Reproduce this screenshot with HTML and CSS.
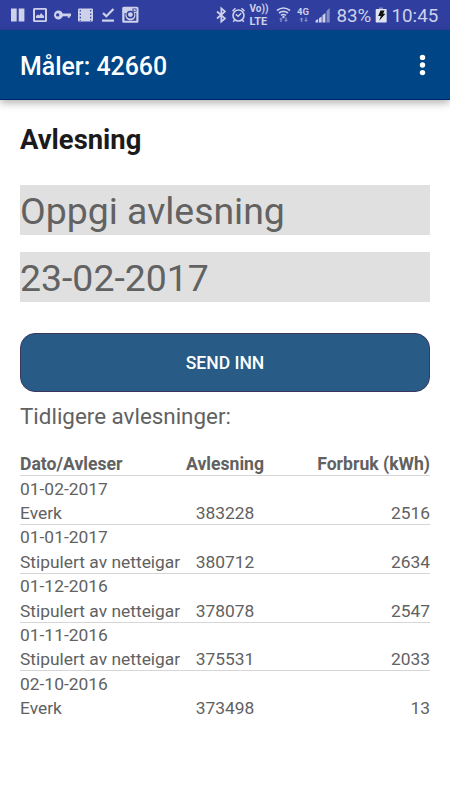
FILE: index.html
```html
<!DOCTYPE html>
<html lang="no">
<head>
<meta charset="utf-8">
<title>Måler: 42660</title>
<link rel="stylesheet" href="styles.css">
</head>
<body>
<div class="status">
  <div class="notifications">
    <svg width="14" height="30" viewBox="11 0 14 30"><path d="M11 8.500h5.700v13H11zM18.700 8.500h5.700v13h-5.700z"/></svg>
    <svg width="14" height="30" viewBox="33 0 14 30"><path fill-rule="evenodd" d="M34.500 8h11q1.500 0 1.500 1.500v11q0 1.500-1.500 1.500h-11q-1.500 0-1.500-1.500v-11q0-1.500 1.500-1.500zM35 9.700v10.600h10V9.700z"/><path d="M36 18v-2l2-1.500 1.300 1 2-2.500 1.300 2 1.400.7V18z"/></svg>
    <svg width="18" height="30" viewBox="54 0 18 30"><path fill-rule="evenodd" d="M58.500 10.500c2 0 3.500 1 4.200 3H71v2.800h-1.200v1.500h-2v-1.500h-5c-.8 2-2.300 3.200-4.300 3.200a4.500 4.500 0 1 1 0-9zM57.700 13.200a1.700 1.700 0 1 0 0 3.400 1.700 1.700 0 0 0 0-3.400z"/></svg>
    <svg width="15" height="30" viewBox="78 0 15 30"><rect x="78" y="8.500" width="15" height="13" rx="1"/><path class="cut" stroke-width="1.200" stroke-dasharray="1.600 1.800" d="M80.300 10v11M90.700 10v11"/></svg>
    <svg width="13" height="30" viewBox="102 0 13 30"><path class="line" stroke-width="2.200" d="M103 13l3.300 3.300L113.500 9"/><path d="M102 19.500h12v2.200h-12z"/></svg>
    <svg width="17" height="30" viewBox="122 0 17 30"><path fill-rule="evenodd" d="M123.700 6.800H137q1.500 0 1.500 1.500v13q0 1.500-1.500 1.500h-13.300q-1.500 0-1.500-1.500v-13q0-1.500 1.500-1.500zM124.500 13v7.800h11.800V13h-1.500a5 5 0 1 1-8.800 0zM132.500 8.500v3.200h4V8.500z"/><circle class="cut" cx="130.400" cy="14.600" r="3.200" stroke-width="1.500"/><path d="M133.500 9.300h2.200V11h-2.200z"/></svg>
  </div>
  <div class="system">
    <svg width="10" height="30" viewBox="215.500 0 10 30"><path class="line" stroke-width="1.700" d="M216.500 11.500l8 7-3.700 3.200V8.300l3.700 3.200-8 7"/></svg>
    <svg class="alarm" width="14" height="30" viewBox="232 0 14 30"><circle class="line" cx="238.500" cy="15.500" r="5.500" stroke-width="1.600"/><path class="line" stroke-width="1.500" d="M232.500 11l3-2.800M244.500 11l-3-2.800M234.700 20l-1.500 1.700M242.300 20l1.500 1.700M235.800 14.300l2.400 2 3-3"/></svg>
    <div class="volte"><span>Vo))</span><span class="lte">LTE</span></div>
    <svg class="wifi" width="15" height="30" viewBox="276 0 15 30"><path class="line" stroke-width="1.700" d="M277 10.500q6.500-5 13 0M279 13q4.500-3.300 9 0M281 15.400q2.500-1.800 5 0"/><circle cx="283.500" cy="17" r="1.200"/><path class="dim" d="M281 17.500l2 2h-1.300V22h-1.400v-2.500H279zM286 22l-2-2h1.300v-2.500h1.400V20h1.300z"/></svg>
    <div class="network"><span>4G</span><svg width="13" height="6" viewBox="0 0 13 6"><path class="dim" d="M4.500.5l2 2H5.200V5H3.800V2.500H2.500zM9 5L7 3h1.300V.5h1.400V3H11z"/></svg></div>
    <svg class="signal" width="15" height="30" viewBox="315 0 15 30"><path d="M315.500 22.500v-2l2.700-1.500v3.500zM319 22.500v-4.300l2.700-1.800v6.100zM322.500 22.500v-7.300l2.900-2.200v9.500z"/><path class="dim" d="M326.500 22.500V11l3.200-3v14.500z"/></svg>
    <span class="percent">83%</span>
    <svg class="battery" width="12" height="30" viewBox="374 0 12 30"><path class="dim" d="M378 7.500h4v2h-4z"/><rect class="charge" x="374.700" y="9" width="11" height="13.600" rx=".8"/><path class="bolt" d="M379.500 10.500h4l-1.400 3.200h2.300l-6.200 7 1.600-4.600h-2.600z"/></svg>
    <span class="clock">10:45</span>
  </div>
</div>
<header class="appbar">
  <h1>Måler: 42660</h1>
  <svg width="8" height="24" viewBox="0 0 8 24"><circle cx="4.500" cy="4.400" r="2.700"/><circle cx="4.500" cy="12" r="2.700"/><circle cx="4.500" cy="19.600" r="2.700"/></svg>
</header>
<main>
  <h2>Avlesning</h2>
  <div class="field">Oppgi avlesning</div>
  <div class="field">23-02-2017</div>
  <button class="send">SEND INN</button>
  <p class="previous">Tidligere avlesninger:</p>
  <div class="readings">
    <div class="row head"><span>Dato/Avleser</span><span>Avlesning</span><span>Forbruk (kWh)</span></div>
    <div class="row"><span>01-02-2017<br>Everk</span><span>383228</span><span>2516</span></div>
    <div class="row"><span>01-01-2017<br>Stipulert av netteigar</span><span>380712</span><span>2634</span></div>
    <div class="row"><span>01-12-2016<br>Stipulert av netteigar</span><span>378078</span><span>2547</span></div>
    <div class="row"><span>01-11-2016<br>Stipulert av netteigar</span><span>375531</span><span>2033</span></div>
    <div class="row"><span>02-10-2016<br>Everk</span><span>373498</span><span>13</span></div>
  </div>
</main>
</body>
</html>
```
FILE: styles.css
```css
* { box-sizing: border-box; }
body {
  margin: 0;
  background: #fff;
  color: #616161;
  font-family: Roboto, "Liberation Sans", sans-serif;
}
svg { display: block; flex: none; }
.status {
  display: flex;
  height: 30px;
  background: #303f9f;
  color: #cdd1ea;
  overflow: hidden;
}
.status svg { fill: #cdd1ea; }
.status .line { fill: none; stroke: #cdd1ea; }
.status .cut { fill: none; stroke: #303f9f; }
.status .dim { fill: #838cc5; }
.status .charge { fill: #e0e3f3; }
.status .bolt { fill: #101010; }
.notifications {
  display: flex;
  width: 215.5px;
  padding-left: 11px;
  gap: 8px;
}
.notifications svg:nth-child(3) { margin-left: -1px; }
.notifications svg:nth-child(4) { margin-left: -2px; }
.notifications svg:nth-child(5) { margin-left: 1px; }
.notifications svg:nth-child(6) { margin-left: -1px; }
.system { display: flex; }
.alarm { margin-left: 6.5px; }
.volte {
  width: 27px;
  padding: 4px 0 0 3.500px;
  font-size: 10px;
  font-weight: 700;
}
.volte span { display: block; height: 11px; line-height: 10px; white-space: nowrap; }
.volte .lte { height: 13px; font-size: 11px; line-height: 13px; }
.wifi { margin-left: 3px; }
.network {
  width: 18px;
  margin-left: 6px;
  padding-top: 7px;
  font-size: 9.500px;
  font-weight: 700;
  line-height: 10px;
}
.network span { display: block; }
.percent, .clock { font-size: 18.800px; line-height: 32px; white-space: nowrap; }
.percent { width: 38px; margin-left: 6.500px; }
.clock { margin-left: 5px; }
.appbar {
  position: relative;
  display: flex;
  align-items: center;
  justify-content: space-between;
  height: 70px;
  padding: 0 24px 0 20px;
  background: #004585;
  border-bottom: 1px solid #002370;
  box-shadow: 0 3px 8px rgba(0, 0, 0, .3);
  color: #fff;
}
.appbar svg { fill: #fff; }
h1 { margin: 4px 0 0; font-size: 24.900px; font-weight: 500; line-height: 30px; }
main { padding: 22px 20px 0; }
h2 { margin: 0 0 27px; color: #1b1b1b; font-size: 27.400px; font-weight: 700; line-height: 36px; }
.field {
  height: 50px;
  margin-bottom: 17.400px;
  background: #e0e0e0;
  color: #626262;
  font-size: 37.400px;
  line-height: 53.200px;
  white-space: nowrap;
}
.send {
  display: block;
  width: 100%;
  height: 59.500px;
  margin: 30.300px 0 0;
  padding-top: 3px;
  border: 1px solid #3d3760;
  border-radius: 15px;
  background: #285c86;
  color: #fff;
  font: 500 17.500px Roboto, sans-serif;
}
.previous { margin: 10px 0 22px; font-size: 22.400px; line-height: 28px; }
.row {
  display: grid;
  grid-template-columns: 150px 110px 150px;
  align-items: end;
  height: 48.800px;
  border-bottom: 1px solid #d6d6d6;
  font-size: 17.400px;
  line-height: 24.400px;
  white-space: nowrap;
}
.row span { margin-bottom: -1.400px; }
.row span:nth-child(2) { text-align: center; }
.row span:nth-child(3) { text-align: right; }
.row.head { height: 24px; align-items: start; line-height: 25px; font-size: 17.600px; font-weight: 700; }
.row:last-child { border: 0; }
.row:last-child span { margin-bottom: -.4px; }
```
